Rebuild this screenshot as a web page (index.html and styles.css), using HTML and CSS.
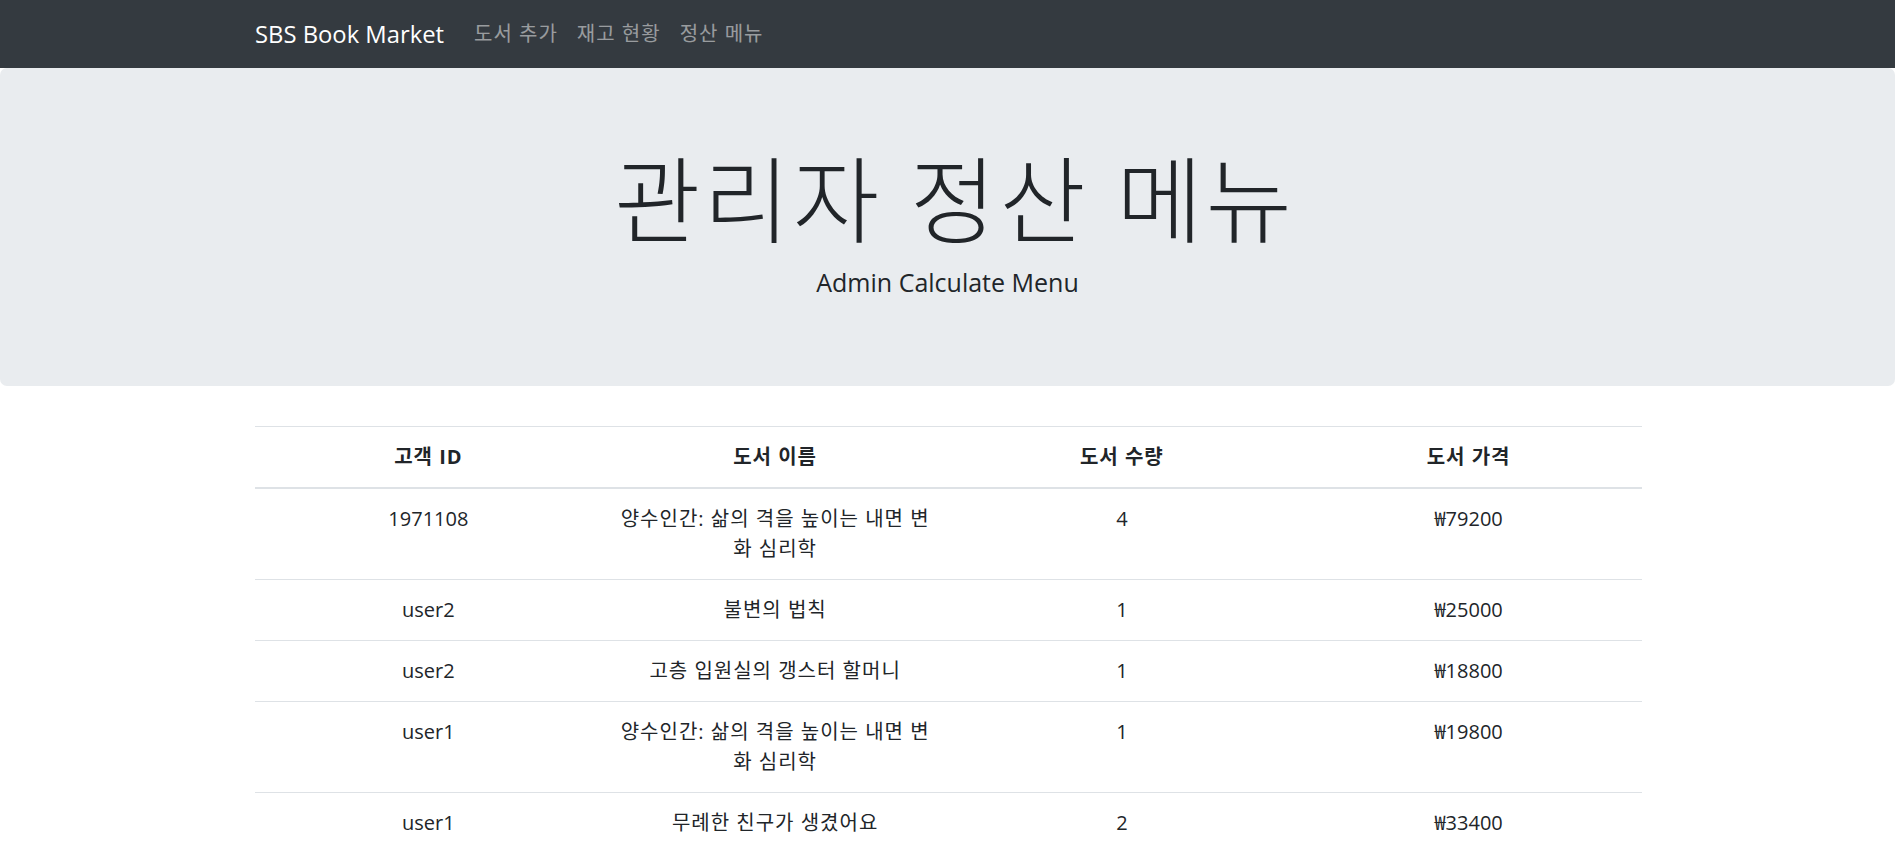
FILE: index.html
```html
<!DOCTYPE html>
<html lang="ko">
<head>
<meta charset="utf-8">
<title>정산 메뉴</title>
<link rel="stylesheet" href="styles.css">
</head>
<body>
<nav class="navbar">
  <div class="container nav-inner">
    <a class="brand" href="#">SBS Book Market</a>
    <a class="nav-link ko" href="#">도서 추가</a>
    <a class="nav-link ko" href="#">재고 현황</a>
    <a class="nav-link ko" href="#">정산 메뉴</a>
  </div>
</nav>
<header class="jumbotron">
  <h1 class="display">관리자 정산 메뉴</h1>
  <h4 class="subtitle">Admin Calculate Menu</h4>
</header>
<main class="container">
  <table class="table">
    <thead>
      <tr><th class="ko">고객 ID</th><th class="ko">도서 이름</th><th class="ko">도서 수량</th><th class="ko">도서 가격</th></tr>
    </thead>
    <tbody>
      <tr><td>1971108</td><td class="ko">양수인간: 삶의 격을 높이는 내면 변화 심리학</td><td>4</td><td>₩79200</td></tr>
      <tr><td>user2</td><td class="ko">불변의 법칙</td><td>1</td><td>₩25000</td></tr>
      <tr><td>user2</td><td class="ko">고층 입원실의 갱스터 할머니</td><td>1</td><td>₩18800</td></tr>
      <tr><td>user1</td><td class="ko">양수인간: 삶의 격을 높이는 내면 변화 심리학</td><td>1</td><td>₩19800</td></tr>
      <tr><td>user1</td><td class="ko">무례한 친구가 생겼어요</td><td>2</td><td>₩33400</td></tr>
    </tbody>
  </table>
</main>
</body>
</html>
```

FILE: styles.css
```css
* { box-sizing: border-box; }
html, body { margin: 0; padding: 0; }
body {
  font-family: "Open Sans", "Noto Sans CJK KR", sans-serif;
  font-size: 20px;
  line-height: 30px;
  color: #212529;
  background: #fff;
}
.ko { letter-spacing: 1px; }
.container {
  width: 1389px;
  padding-left: 2px;
  margin: 0 auto;
}
.navbar {
  background: #343a40;
  height: 68px;
}
.nav-inner {
  display: flex;
  align-items: center;
  height: 68px;
}
.brand {
  color: #fff;
  font-size: 23.8px;
  text-decoration: none;
  margin-right: 20px;
  line-height: 36px;
}
.nav-link {
  color: rgba(255, 255, 255, 0.5);
  text-decoration: none;
  padding: 0 10px;
  line-height: 30px;
}
.nav-link + .nav-link { margin-left: -1px; }
.jumbotron {
  background: #e9ecef;
  border-radius: 7px;
  padding: 78px 40px 0;
  height: 318px;
  margin-bottom: 40px;
  text-align: center;
}
.display {
  font-size: 94px;
  font-weight: 300;
  line-height: 108px;
  letter-spacing: 3px;
  padding-left: 14px;
  margin: 0 0 12px;
}
.subtitle {
  font-size: 25px;
  font-weight: 500;
  line-height: 32px;
  margin: 0;
}
.table {
  width: 100%;
  border-collapse: collapse;
  table-layout: fixed;
  text-align: center;
}
.table th, .table td {
  padding: 15px;
  border-top: 1px solid #dee2e6;
  vertical-align: top;
}
.table th { font-weight: 700; }
.table thead th { border-bottom: 2px solid #dee2e6; }
```
